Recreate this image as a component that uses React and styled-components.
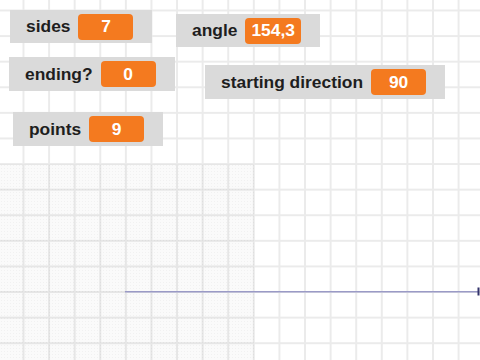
import React from 'react';
import styled, { createGlobalStyle } from 'styled-components';

const GlobalStyle = createGlobalStyle`
  html, body {
    margin: 0;
    padding: 0;
    background: #ffffff;
  }
  body {
    font-family: "Liberation Sans", Arial, Helvetica, sans-serif;
  }
`;

const GRID = 25.6;

const Stage = styled.div`
  position: relative;
  width: 480px;
  height: 360px;
  overflow: hidden;
  background-color: #ffffff;
  background-image:
    linear-gradient(to right, #ebebeb 2px, transparent 2px),
    linear-gradient(to bottom, #ebebeb 2px, transparent 2px);
  background-size: ${GRID}px ${GRID}px;
  background-position: 22.5px 9.5px;
`;

// the lighter dotted patch in the lower left of the stage
const Shade = styled.div`
  position: absolute;
  left: 0;
  top: 164px;
  width: 254px;
  height: 196px;
  background-color: rgba(0, 0, 0, 0.018);
  background-image: radial-gradient(rgba(0, 0, 0, 0.035) 0.6px, transparent 0.8px);
  background-size: 3px 3px;
`;

const PenLayer = styled.svg`
  position: absolute;
  left: 0;
  top: 0;
  width: 480px;
  height: 360px;
`;

const Monitor = styled.div`
  position: absolute;
  left: ${(p) => p.x}px;
  top: ${(p) => p.y}px;
  height: ${(p) => p.h || 34}px;
  display: flex;
  align-items: center;
  gap: 8px;
  padding: 0 19px 0 16px;
  background: #dadada;
`;

const Label = styled.span`
  font-size: 17.4px;
  font-weight: bold;
  color: #1e1e1e;
  white-space: nowrap;
`;

const Value = styled.span`
  min-width: 55px;
  height: 26px;
  padding: 0 6px;
  box-sizing: border-box;
  display: flex;
  align-items: center;
  justify-content: center;
  border-radius: 4px;
  background: #f47a1f;
  color: #ffffff;
  font-size: 17.4px;
  font-weight: bold;
`;

const monitors = [
  { label: 'sides', value: '7', x: 10, y: 10, h: 33 },
  { label: 'ending?', value: '0', x: 9, y: 57 },
  { label: 'points', value: '9', x: 13, y: 112 },
  { label: 'angle', value: '154,3', x: 176, y: 14, h: 33 },
  { label: 'starting direction', value: '90', x: 205, y: 65 },
];

export default function App() {
  return (
    <>
      <GlobalStyle />
      <Stage>
        <Shade />
        <PenLayer viewBox='0 0 480 360'>
          <line x1='125' y1='291.7' x2='478' y2='291.7' stroke='#9a9ac6' strokeWidth='1.5' />
          <rect x='477.5' y='287.5' width='2' height='8' fill='#33336a' />
        </PenLayer>
        {monitors.map((m) => (
          <Monitor key={m.label} x={m.x} y={m.y} h={m.h}>
            <Label>{m.label}</Label>
            <Value>{m.value}</Value>
          </Monitor>
        ))}
      </Stage>
    </>
  );
}
